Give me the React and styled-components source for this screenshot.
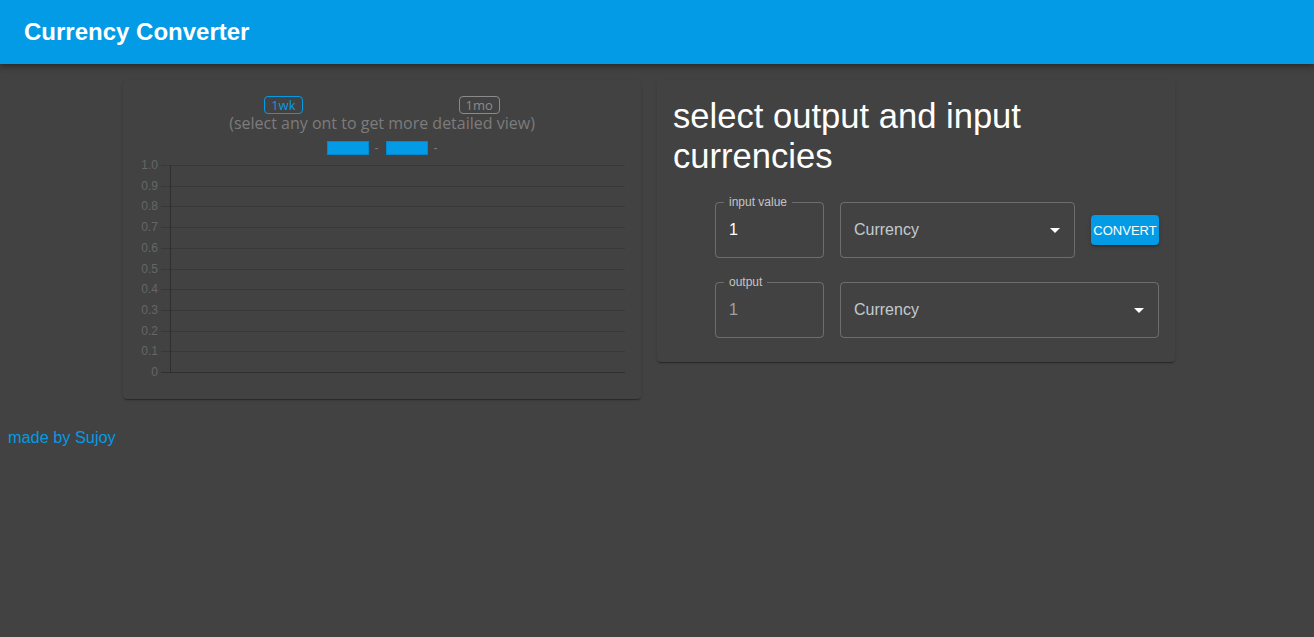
import React, { useState } from 'react';
import styled, { createGlobalStyle } from 'styled-components';

const Global = createGlobalStyle`
  html, body {
    margin: 0;
    padding: 0;
    background: #424242;
    font-family: 'Liberation Sans', Arial, sans-serif;
    min-height: 100%;
  }
`;

const Page = styled.div`
  min-height: 637px;
  background: #424242;
`;

const AppBar = styled.header`
  height: 64px;
  background: #039be5;
  display: flex;
  align-items: center;
  padding: 0 24px;
  box-shadow: 0 2px 4px -1px rgba(0,0,0,0.2), 0 4px 5px 0 rgba(0,0,0,0.14), 0 1px 10px 0 rgba(0,0,0,0.12);
  position: relative;
`;

const Title = styled.h1`
  margin: 0;
  color: #fff;
  font-size: 24px;
  font-weight: 700;
`;

const Main = styled.main`
  display: flex;
  justify-content: center;
  align-items: flex-start;
  gap: 16px;
  padding: 16px 16px 16px 0;
`;

const Card = styled.section`
  width: 518px;
  box-sizing: border-box;
  background: #424242;
  border-radius: 4px;
  padding: ${p => p.$pad || '16px'};
  box-shadow: 0 2px 1px -1px rgba(0,0,0,0.2), 0 1px 1px 0 rgba(0,0,0,0.14), 0 1px 3px 0 rgba(0,0,0,0.12);
`;

const RangeRow = styled.div`
  display: flex;
  justify-content: center;
  gap: 156px;
`;

const RangeBtn = styled.button`
  height: 18px;
  padding: 0 6px;
  border-radius: 4px;
  background: transparent;
  border: 1px solid ${p => (p.$active ? '#039be5' : '#8a8a8a')};
  color: ${p => (p.$active ? '#039be5' : '#8a8a8a')};
  font-family: 'Open Sans', sans-serif;
  font-size: 13px;
  line-height: 16px;
  cursor: pointer;
`;

const Hint = styled.div`
  text-align: center;
  color: #7c7c7c;
  font-family: 'Open Sans', sans-serif;
  font-size: 16px;
  line-height: 19px;
`;

const Legend = styled.div`
  display: flex;
  justify-content: center;
  gap: 7px;
  margin: 8px 0 3px;
  height: 14px;
  align-items: center;
`;

const LegendItem = styled.div`
  display: flex;
  align-items: center;
  gap: 6px;
  color: #7c7c7c;
  font-size: 12px;
`;

const Swatch = styled.span`
  width: 40px;
  height: 12px;
  background: #039be5;
  border: 1px solid #0288d1;
`;

const ChartSvg = styled.svg`
  display: block;
`;

const Heading = styled.h2`
  margin: 0 0 26px;
  color: #fff;
  font-size: 34.6px;
  font-weight: 400;
  line-height: 40px;
`;

const FormRow = styled.div`
  display: flex;
  justify-content: flex-end;
  align-items: center;
  gap: 16px;
  margin-bottom: 24px;
`;

const Field = styled.div`
  position: relative;
  width: ${p => p.$w}px;
  height: 56px;
  box-sizing: border-box;
  border: 1px solid rgba(255,255,255,0.23);
  border-radius: 4px;
  display: flex;
  align-items: center;
  padding: 0 13px;
`;

const FieldLabel = styled.label`
  position: absolute;
  top: -8px;
  left: 8px;
  padding: 0 5px;
  background: #424242;
  color: rgba(255,255,255,0.7);
  font-size: 12px;
  line-height: 14px;
`;

const Value = styled.input`
  width: 100%;
  background: transparent;
  border: none;
  outline: none;
  padding: 0;
  font-family: 'Liberation Sans', Arial, sans-serif;
  font-size: 16px;
  color: ${p => (p.disabled ? 'rgba(255,255,255,0.5)' : '#fff')};
`;

const SelectText = styled.span`
  color: #c3cbd0;
  font-size: 16px;
  flex: 1;
`;

const Caret = styled.svg`
  position: absolute;
  right: 7px;
  top: 15px;
`;

const ConvertBtn = styled.button`
  width: 68px;
  height: 30px;
  border: none;
  border-radius: 4px;
  background: #039be5;
  color: #fff;
  font-family: 'Liberation Sans', Arial, sans-serif;
  font-size: 13px;
  padding: 0;
  cursor: pointer;
  box-shadow: 0 3px 1px -2px rgba(0,0,0,0.2), 0 2px 2px 0 rgba(0,0,0,0.14), 0 1px 5px 0 rgba(0,0,0,0.12);
`;

const Footer = styled.p`
  margin: 13px 0 0 8px;
  color: #039be5;
  font-size: 16.3px;
  line-height: 18px;
`;

const ticks = ['1.0', '0.9', '0.8', '0.7', '0.6', '0.5', '0.4', '0.3', '0.2', '0.1', '0'];

const Chart = () => {
  const top = 7;
  const bottom = 214;
  const step = (bottom - top) / 10;
  return (
    <ChartSvg width="486" height="225">
      {ticks.map((t, i) => {
        const y = Math.round(top + i * step) + 0.5;
        return (
          <g key={t}>
            <line x1="22" x2="486" y1={y} y2={y} stroke={i === 10 ? '#2f2f2f' : '#383838'} strokeWidth="1" />
            <text x="19" y={y} textAnchor="end" dominantBaseline="middle" fill="#666" fontSize="12" fontFamily="Liberation Sans, Arial, sans-serif">{t}</text>
          </g>
        );
      })}
      <line x1="31.5" x2="31.5" y1={top} y2={bottom + 1} stroke="#2f2f2f" strokeWidth="1" />
    </ChartSvg>
  );
};

const CurrencySelect = ({ w }) => (
  <Field $w={w}>
    <SelectText>Currency</SelectText>
    <Caret width="24" height="24" viewBox="0 0 24 24">
      <path d="M7 10l5 5 5-5z" fill="#fff" />
    </Caret>
  </Field>
);

export default function App() {
  const [range, setRange] = useState('1wk');
  const [amount, setAmount] = useState('1');

  return (
    <Page>
      <Global />
      <AppBar>
        <Title>Currency Converter</Title>
      </AppBar>
      <Main>
        <Card>
          <RangeRow>
            <RangeBtn $active={range === '1wk'} onClick={() => setRange('1wk')}>1wk</RangeBtn>
            <RangeBtn $active={range === '1mo'} onClick={() => setRange('1mo')}>1mo</RangeBtn>
          </RangeRow>
          <Hint>(select any ont to get more detailed view)</Hint>
          <Legend>
            <LegendItem><Swatch />-</LegendItem>
            <LegendItem><Swatch />-</LegendItem>
          </Legend>
          <Chart />
        </Card>
        <Card $pad="16px 16px 0">
          <Heading>select output and input currencies</Heading>
          <FormRow>
            <Field $w={109}>
              <FieldLabel>input value</FieldLabel>
              <Value value={amount} onChange={e => setAmount(e.target.value)} />
            </Field>
            <CurrencySelect w={235} />
            <ConvertBtn>CONVERT</ConvertBtn>
          </FormRow>
          <FormRow>
            <Field $w={109}>
              <FieldLabel>output</FieldLabel>
              <Value value="1" disabled readOnly />
            </Field>
            <CurrencySelect w={319} />
          </FormRow>
        </Card>
      </Main>
      <Footer>made by Sujoy</Footer>
    </Page>
  );
}
